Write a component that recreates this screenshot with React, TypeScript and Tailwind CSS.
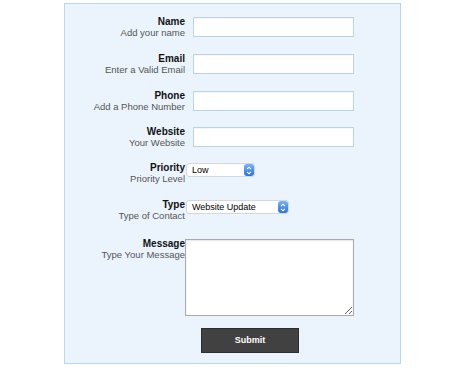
import React from "react";

const labelFont = { fontFamily: '"Liberation Sans", Arial, sans-serif' };

function Label({ title, desc }: { title: string; desc: string }) {
  return (
    <div className="w-[120px] shrink-0 text-right" style={labelFont}>
      <div className="text-[10px] leading-[10px] font-bold text-[#111]">{title}</div>
      <div className="text-[9.5px] leading-[11px] text-[#555]">{desc}</div>
    </div>
  );
}

function Stepper() {
  return (
    <div className="absolute right-0 top-0 bottom-0 w-[10px] rounded-[3px] bg-gradient-to-b from-[#74b4f8] to-[#2d6fdc] flex flex-col items-center justify-center gap-[1px]">
      <svg width="6" height="4" viewBox="0 0 6 4">
        <path d="M1 3.2 L3 1.2 L5 3.2" stroke="white" strokeWidth="1.1" fill="none" />
      </svg>
      <svg width="6" height="4" viewBox="0 0 6 4">
        <path d="M1 0.8 L3 2.8 L5 0.8" stroke="white" strokeWidth="1.1" fill="none" />
      </svg>
    </div>
  );
}

function Select({ value, width }: { value: string; width: string }) {
  return (
    <div className={`relative ml-[1px] h-[14px] ${width} rounded-[3px] bg-white border border-[#d2d8de]`}>
      <div className="pl-[5px] text-[9px] leading-[12px] text-black" style={labelFont}>
        {value}
      </div>
      <Stepper />
    </div>
  );
}

function TextInput() {
  return (
    <input
      type="text"
      className="ml-[8px] w-[161px] h-[20px] bg-white border border-[#bcd3e3] outline-none shadow-[inset_0_1px_1px_rgba(0,0,0,0.04)]"
    />
  );
}

export default function App() {
  return (
    <div className="w-[474px] h-[368px] bg-white pt-[3px]">
      <div className="ml-[64px] w-[337px] h-[361px] border border-[#b9d8ea] bg-[#ebf4fc] pt-[13px] flex flex-col">
        <div className="flex items-start h-[37px]">
          <Label title="Name" desc="Add your name" />
          <TextInput />
        </div>
        <div className="flex items-start h-[37px]">
          <Label title="Email" desc="Enter a Valid Email" />
          <TextInput />
        </div>
        <div className="flex items-start h-[36px]">
          <Label title="Phone" desc="Add a Phone Number" />
          <TextInput />
        </div>
        <div className="flex items-start h-[36px]">
          <Label title="Website" desc="Your Website" />
          <TextInput />
        </div>
        <div className="flex items-start h-[37px]">
          <Label title="Priority" desc="Priority Level" />
          <Select value="Low" width="w-[69px]" />
        </div>
        <div className="flex items-start h-[39px]">
          <Label title="Type" desc="Type of Contact" />
          <Select value="Website Update" width="w-[103px]" />
        </div>
        <div className="flex items-start h-[89px]">
          <Label title="Message" desc="Type Your Message" />
          <textarea className="w-[169px] h-[77px] bg-white border border-[#a9a9a9] outline-none shadow-[inset_0_1px_2px_rgba(0,0,0,0.1)]" />
        </div>
        <div className="flex">
          <button
            className="ml-[136px] w-[98px] h-[25px] bg-[#414141] border border-[#2e2e2e] text-white text-[9px] font-bold"
            style={labelFont}
          >
            Submit
          </button>
        </div>
      </div>
    </div>
  );
}
